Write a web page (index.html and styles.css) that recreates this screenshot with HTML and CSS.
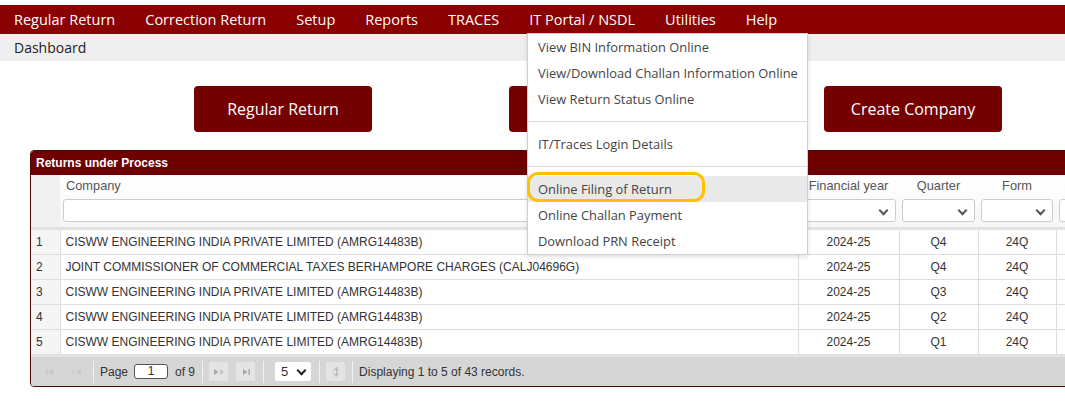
FILE: index.html
```html
<!DOCTYPE html>
<html>
<head>
    <meta charset="utf-8">
    <link rel="stylesheet" href="styles.css">
</head>
<body>
    <div class="menubar">
        <span class="menu_item">Regular Return</span>
        <span class="menu_item">Correction Return</span>
        <span class="menu_item">Setup</span>
        <span class="menu_item">Reports</span>
        <span class="menu_item">TRACES</span>
        <span class="menu_item">IT Portal / NSDL</span>
        <span class="menu_item">Utilities</span>
        <span class="menu_item">Help</span>
    </div>
    <div class="subbar">Dashboard</div>

    <div class="actions">
        <button class="big_btn">Regular Return</button>
        <!-- label of this one sits under the open menu -->
        <button class="big_btn" aria-label="Correction Return"></button>
        <button class="big_btn">Create Company</button>
    </div>

    <div class="panel">
        <div class="panel_title">Returns under Process</div>
        <table class="grid">
            <colgroup>
                <col class="c_num">
                <col class="c_company">
                <col class="c_fy">
                <col class="c_qtr">
                <col class="c_form">
                <col class="c_extra">
            </colgroup>
            <thead>
                <tr>
                    <th class="num"></th>
                    <th class="left">
                        <div class="th_label">Company</div>
                        <input class="filter" type="text">
                    </th>
                    <th>
                        <div class="th_label">Financial year</div>
                        <div class="select"><span class="caret"></span></div>
                    </th>
                    <th>
                        <div class="th_label">Quarter</div>
                        <div class="select"><span class="caret"></span></div>
                    </th>
                    <th>
                        <div class="th_label">Form</div>
                        <div class="select"><span class="caret"></span></div>
                    </th>
                    <th>
                        <div class="th_label"></div>
                        <div class="select"><span class="caret"></span></div>
                    </th>
                </tr>
            </thead>
            <tbody>
                <tr>
                    <td class="num">1</td>
                    <td class="left">CISWW ENGINEERING INDIA PRIVATE LIMITED (AMRG14483B)</td>
                    <td>2024-25</td><td>Q4</td><td>24Q</td><td></td>
                </tr>
                <tr>
                    <td class="num">2</td>
                    <td class="left">JOINT COMMISSIONER OF COMMERCIAL TAXES BERHAMPORE CHARGES (CALJ04696G)</td>
                    <td>2024-25</td><td>Q4</td><td>24Q</td><td></td>
                </tr>
                <tr>
                    <td class="num">3</td>
                    <td class="left">CISWW ENGINEERING INDIA PRIVATE LIMITED (AMRG14483B)</td>
                    <td>2024-25</td><td>Q3</td><td>24Q</td><td></td>
                </tr>
                <tr>
                    <td class="num">4</td>
                    <td class="left">CISWW ENGINEERING INDIA PRIVATE LIMITED (AMRG14483B)</td>
                    <td>2024-25</td><td>Q2</td><td>24Q</td><td></td>
                </tr>
                <tr>
                    <td class="num">5</td>
                    <td class="left">CISWW ENGINEERING INDIA PRIVATE LIMITED (AMRG14483B)</td>
                    <td>2024-25</td><td>Q1</td><td>24Q</td><td></td>
                </tr>
            </tbody>
        </table>
        <div class="pager">
            <span class="pbtn off p_first">
                <svg width="10" height="8" viewBox="0 0 10 8"><rect x="1" y="1" width="1.5" height="6" fill="#c4c4c4"/><path d="M8 1 L3.5 4 L8 7 Z" fill="#c4c4c4"/></svg>
            </span>
            <span class="pbtn off p_prev">
                <svg width="12" height="8" viewBox="0 0 12 8"><path d="M5 2 L2 4 L5 6" stroke="#c4c4c4" fill="none"/><path d="M11 1 L6.5 4 L11 7 Z" fill="#c4c4c4"/></svg>
            </span>
            <span class="psep s1"></span>
            <span class="ptext p_page">Page</span>
            <span class="pinput">1</span>
            <span class="ptext p_of">of 9</span>
            <span class="psep s2"></span>
            <span class="pbtn box p_next">
                <svg width="12" height="8" viewBox="0 0 12 8"><path d="M1 1 L5.5 4 L1 7 Z" fill="#a8a8a8"/><path d="M7 2 L10 4 L7 6" stroke="#a8a8a8" fill="none"/></svg>
            </span>
            <span class="pbtn box p_last">
                <svg width="10" height="8" viewBox="0 0 10 8"><path d="M2 1 L6.5 4 L2 7 Z" fill="#a8a8a8"/><rect x="7.5" y="1" width="1.5" height="6" fill="#a8a8a8"/></svg>
            </span>
            <span class="psep s3"></span>
            <span class="psize">5 <span class="caret dark"></span></span>
            <span class="psep s4"></span>
            <span class="pbtn box p_reload">
                <svg width="10" height="12" viewBox="0 0 10 12"><path d="M2.2 7.5 A3 3 0 0 0 7.8 7 M7.8 4.5 A3 3 0 0 0 2.2 5" stroke="#b0b0b0" fill="none"/><path d="M6 1 L5 11" stroke="#b0b0b0"/></svg>
            </span>
            <span class="psep s5"></span>
            <span class="ptext p_info">Displaying 1 to 5 of 43 records.</span>
        </div>
    </div>

    <div class="dropdown">
        <div class="dd_item">View BIN Information Online</div>
        <div class="dd_item">View/Download Challan Information Online</div>
        <div class="dd_item">View Return Status Online</div>
        <div class="dd_sep"></div>
        <div class="dd_item">IT/Traces Login Details</div>
        <div class="dd_sep"></div>
        <div class="dd_item hover">Online Filing of Return</div>
        <div class="dd_item">Online Challan Payment</div>
        <div class="dd_item">Download PRN Receipt</div>
    </div>
    <div class="mark"></div>
</body>
</html>
```

FILE: styles.css
```css
body {
    margin: 0;
    background-color: #ffffff;
    font-family: "Open Sans", "Noto Sans", sans-serif;
    overflow: hidden;
    position: relative;
    width: 1065px;
    height: 401px;
}
.menubar {
    margin-top: 5px;
    height: 29px;
    background-color: #8b0000;
    display: flex;
    align-items: center;
    gap: 30px;
    padding-left: 14px;
}
.menu_item {
    color: #ffffff;
    font-size: 14.5px;
    white-space: nowrap;
}
.subbar {
    height: 27px;
    line-height: 27px;
    background-color: #eeeeee;
    padding-left: 14px;
    font-size: 14px;
    color: #222222;
}
.actions {
    display: flex;
    gap: 137px;
    padding-left: 194px;
    margin-top: 25px;
}
.big_btn {
    width: 178px;
    height: 46px;
    border: none;
    border-radius: 4px;
    background-color: #740000;
    color: #ffffff;
    font-family: "Open Sans", "Noto Sans", sans-serif;
    font-size: 16px;
}
.panel {
    margin-top: 18px;
    margin-left: 30px;
    width: 1140px;
    border: 1px solid #4a0a0a;
    border-radius: 4px;
    font-family: "Liberation Sans", Arial, sans-serif;
    font-size: 12px;
    color: #333333;
    overflow: hidden;
}
.panel_title {
    height: 24px;
    line-height: 24px;
    background-color: #6f0000;
    color: #ffffff;
    font-weight: bold;
    padding-left: 5px;
}
.grid {
    border-collapse: collapse;
    table-layout: fixed;
    width: 1100px;
}
.c_num { width: 29px; }
.c_company { width: 738px; }
.c_fy { width: 101px; }
.c_qtr { width: 79px; }
.c_form { width: 78px; }
.c_extra { width: 75px; }
.grid th {
    padding: 0 3px 5px;
    font-weight: normal;
    font-size: 12.8px;
    color: #555555;
    text-align: center;
    border-bottom: 3px solid #e2e2e2;
    background: linear-gradient(#ffffff, #f6f6f6);
    vertical-align: top;
}
.grid th.num {
    background: #f1f1f1;
}
.grid th.left {
    text-align: left;
}
.th_label {
    height: 20px;
    line-height: 21px;
    margin-bottom: 4px;
    white-space: nowrap;
}
.grid th.left .th_label {
    padding-left: 3px;
}
.filter {
    box-sizing: border-box;
    display: block;
    width: 100%;
    height: 23px;
    border: 1px solid #cccccc;
    border-radius: 3px;
    margin: 0;
}
.select {
    box-sizing: border-box;
    height: 23px;
    border: 1px solid #cccccc;
    border-radius: 3px;
    background-color: #ffffff;
    position: relative;
}
.caret {
    position: absolute;
    right: 8px;
    top: 7px;
    width: 5px;
    height: 5px;
    border-right: 2px solid #555555;
    border-bottom: 2px solid #555555;
    transform: rotate(45deg);
}
.grid td {
    height: 24px;
    padding: 0 5px;
    border: 1px solid #dddddd;
    text-align: center;
    white-space: nowrap;
    overflow: hidden;
}
.grid td.left {
    text-align: left;
}
.grid td.num {
    text-align: left;
    background-color: #f5f5f5;
    border-left: none;
}
.pager {
    height: 29px;
    background-color: #d6d6d6;
    border-top: 2px solid #e4e4e4;
    display: flex;
    align-items: center;
    color: #333333;
}
.pbtn {
    width: 19px;
    height: 19px;
    display: flex;
    align-items: center;
    justify-content: center;
}
.pbtn.box {
    background-color: #e4e4e4;
    border-radius: 2px;
}
.pbtn.off svg {
    opacity: 0.8;
}
.psep {
    width: 1px;
    height: 22px;
    background-color: #f2f2f2;
}
.ptext {
    white-space: nowrap;
}
.pinput {
    box-sizing: border-box;
    width: 34px;
    height: 15px;
    line-height: 13px;
    border: 1px solid #555555;
    border-radius: 3px;
    background-color: #ffffff;
    text-align: center;
}
.psize {
    position: relative;
    box-sizing: border-box;
    width: 36px;
    height: 19px;
    line-height: 19px;
    padding-left: 6px;
    background-color: #ffffff;
    border-radius: 2px;
    font-size: 13px;
}
.caret.dark {
    top: 5px;
    right: 6px;
    border-color: #222222;
}
.p_first { margin-left: 9px; }
.p_prev { margin-left: 7px; }
.s1 { margin-left: 8px; }
.p_page { margin-left: 6px; }
.pinput { margin-left: 6px; }
.p_of { margin-left: 7px; }
.s2 { margin-left: 7px; }
.p_next { margin-left: 6px; }
.p_last { margin-left: 8px; }
.s3 { margin-left: 8px; }
.psize { margin-left: 11px; }
.s4 { margin-left: 8px; }
.p_reload { margin-left: 6px; }
.s5 { margin-left: 7px; }
.p_info { margin-left: 6px; }
.dropdown {
    position: absolute;
    left: 527px;
    top: 33px;
    width: 279px;
    background-color: #ffffff;
    border: 1px solid #cfcfcf;
    box-shadow: 0 2px 4px rgba(0, 0, 0, 0.12);
    font-size: 12.9px;
    color: #444444;
}
.dd_item {
    height: 26px;
    line-height: 26px;
    padding-left: 10px;
    white-space: nowrap;
}
.dd_item.hover {
    background-color: #e9e9e9;
}
.dd_sep {
    height: 1px;
    background-color: #dddddd;
    margin: 9px 0;
}
.mark {
    position: absolute;
    left: 527px;
    top: 172px;
    width: 172px;
    height: 24px;
    border: 3px solid #ffc000;
    border-radius: 11px;
}
```
